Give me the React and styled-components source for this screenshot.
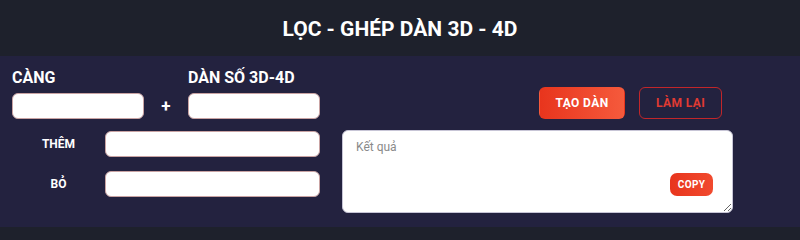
import React, { useState } from "react";
import styled, { createGlobalStyle } from "styled-components";

const red = "#e8351d";
const navy = "#23223f";

const GlobalStyle = createGlobalStyle`
  html, body {
    margin: 0;
    padding: 0;
    background: #1e212c;
    font-family: Roboto, "Noto Sans", sans-serif;
  }
`;

const Page = styled.div`
  width: 800px;
  height: 234px;
  display: flex;
  flex-direction: column;
  background: #1e212c;
`;

const Header = styled.h1`
  margin: 0;
  height: 56px;
  display: flex;
  align-items: center;
  justify-content: center;
  color: #ffffff;
  font-size: 21px;
  font-weight: 700;
  padding-top: 1px;
  box-sizing: border-box;
`;

const Body = styled.div`
  height: 171px;
  background: ${navy};
  box-sizing: border-box;
  padding: 12px 67px 0 12px;
  display: flex;
  flex-direction: column;
  gap: 11px;
`;

const TopRow = styled.div`
  display: flex;
  align-items: flex-end;
`;

const Field = styled.div`
  display: flex;
  flex-direction: column;
  gap: 6px;
`;

const Label = styled.label`
  color: #ffffff;
  font-size: 16px;
  font-weight: 700;
  line-height: 19px;
`;

const Input = styled.input`
  width: ${(p) => p.$w || 132}px;
  height: 26px;
  box-sizing: border-box;
  border: 1px solid #c9a3a3;
  border-radius: 6px;
  background: #ffffff;
  outline: none;
  padding: 0 8px;
  font-family: inherit;
`;

const Plus = styled.span`
  width: 44px;
  height: 26px;
  display: flex;
  align-items: center;
  justify-content: center;
  color: #ffffff;
  font-size: 17px;
  font-weight: 700;
`;

const Actions = styled.div`
  margin-left: auto;
  margin-right: 11px;
  display: flex;
  gap: 14px;
`;

const Button = styled.button`
  height: 32px;
  width: ${(p) => p.$w}px;
  box-sizing: border-box;
  border-radius: 6px;
  font-family: inherit;
  font-size: 12px;
  font-weight: 700;
  letter-spacing: 0.4px;
  cursor: pointer;
  border: 1px solid ${(p) => (p.$outline ? "#c2262a" : "transparent")};
  color: ${(p) => (p.$outline ? "#e03a32" : "#ffffff")};
  background: ${(p) =>
    p.$outline ? "transparent" : `linear-gradient(90deg, ${red}, #f55a3c)`};
`;

const BottomRow = styled.div`
  display: flex;
  gap: 22px;
`;

const Extras = styled.div`
  display: flex;
  flex-direction: column;
  gap: 14px;
  padding-top: 1px;
`;

const ExtraRow = styled.div`
  display: flex;
  align-items: center;
`;

const SmallLabel = styled.label`
  width: 93px;
  text-align: center;
  color: #ffffff;
  font-size: 12px;
  font-weight: 700;
`;

const ResultBox = styled.div`
  position: relative;
  width: 392px;
  height: 83px;
`;

const Result = styled.textarea`
  width: 100%;
  height: 100%;
  box-sizing: border-box;
  border: 1px solid #c7c5d6;
  border-radius: 6px;
  padding: 9px 13px;
  font-family: inherit;
  font-size: 12px;
  outline: none;
  &::placeholder {
    color: #8a8a8a;
  }
`;

const CopyButton = styled.button`
  position: absolute;
  right: 20px;
  bottom: 17px;
  width: 43px;
  height: 23px;
  border: none;
  border-radius: 7px;
  background: linear-gradient(90deg, ${red}, #f14a2e);
  color: #ffffff;
  font-family: inherit;
  font-size: 10px;
  font-weight: 700;
  letter-spacing: 0.3px;
  cursor: pointer;
`;

export default function App() {
  const [result, setResult] = useState("");

  return (
    <>
      <GlobalStyle />
      <Page>
        <Header>LỌC - GHÉP DÀN 3D - 4D</Header>
        <Body>
          <TopRow>
            <Field>
              <Label>CÀNG</Label>
              <Input />
            </Field>
            <Plus>+</Plus>
            <Field>
              <Label>DÀN SỐ 3D-4D</Label>
              <Input />
            </Field>
            <Actions>
              <Button $w={86}>TẠO DÀN</Button>
              <Button $w={83} $outline onClick={() => setResult("")}>
                LÀM LẠI
              </Button>
            </Actions>
          </TopRow>
          <BottomRow>
            <Extras>
              <ExtraRow>
                <SmallLabel>THÊM</SmallLabel>
                <Input $w={215} />
              </ExtraRow>
              <ExtraRow>
                <SmallLabel>BỎ</SmallLabel>
                <Input $w={215} />
              </ExtraRow>
            </Extras>
            <ResultBox>
              <Result
                placeholder="Kết quả"
                value={result}
                onChange={(e) => setResult(e.target.value)}
              />
              <CopyButton>COPY</CopyButton>
            </ResultBox>
          </BottomRow>
        </Body>
      </Page>
    </>
  );
}
